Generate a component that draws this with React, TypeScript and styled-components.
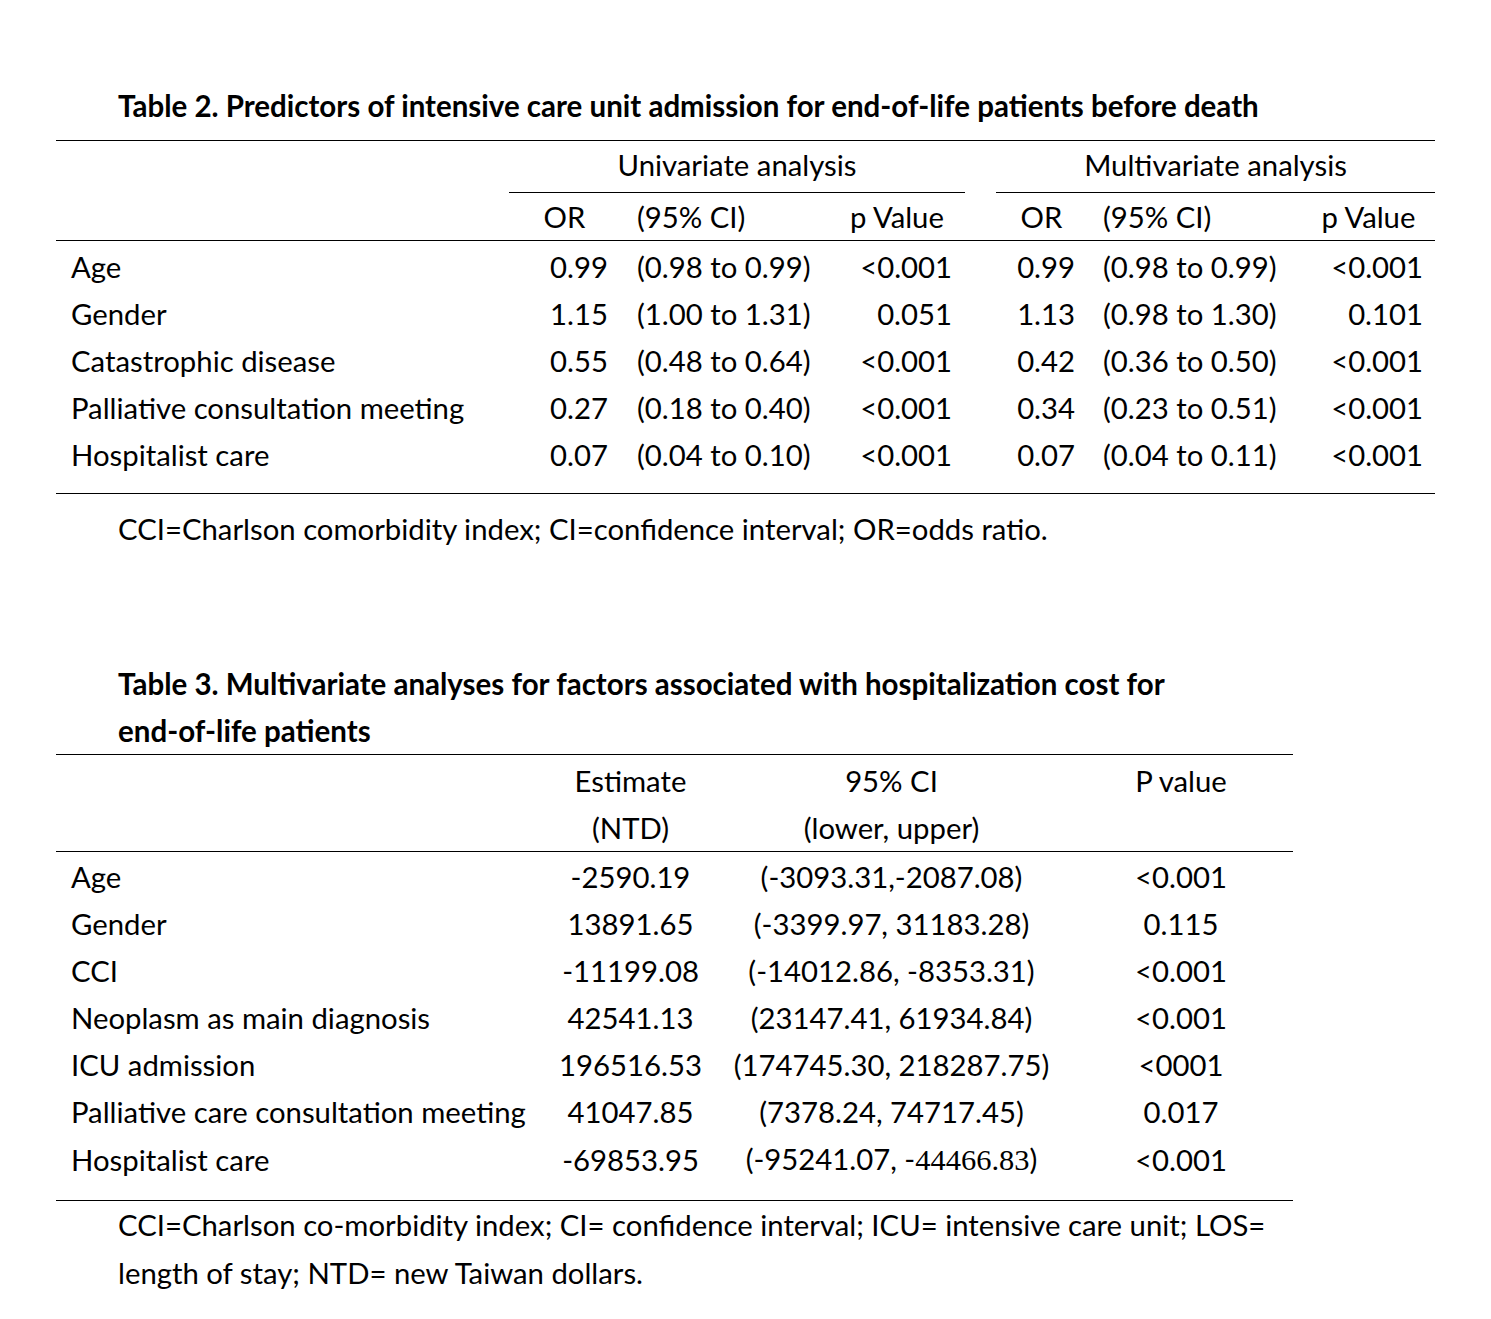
import styled, { createGlobalStyle } from "styled-components"

const GlobalStyle = createGlobalStyle`
  html, body {
    margin: 0;
    background: #fff;
  }
  body {
    font-family: "Lato", "Liberation Sans", sans-serif;
    color: #000;
  }
`

const Page = styled.div`
  display: flex;
  flex-direction: column;
  padding: 82px 0 0 56px;
  font-size: 29.3px;
  line-height: 47px;
`

const Title = styled.h2<{ $top?: number; $bottom?: number }>`
  margin: ${(p) => p.$top ?? 0}px 0 ${(p) => p.$bottom ?? 0}px 62px;
  font-size: 29.5px;
  font-weight: bold;
  line-height: 47px;
`

const Footnote = styled.p<{ $top: number }>`
  margin: ${(p) => p.$top}px 0 0 62px;
  line-height: 48px;
`

const Table = styled.table<{ $width: number }>`
  width: ${(p) => p.$width}px;
  border-collapse: collapse;
  table-layout: fixed;
  border-top: 1px solid #000;
  border-bottom: 1px solid #000;
`

const Row = styled.tr<{ $h: number; $line?: boolean }>`
  height: ${(p) => p.$h}px;
  ${(p) => (p.$line ? "td { border-bottom: 1px solid #000; }" : "")}
`

const Cell = styled.td<{
  $align?: "left" | "center" | "right"
  $underline?: boolean
  $pad?: number
  $pb?: number
}>`
  padding: 0;
  padding-left: ${(p) => (p.$align === "left" ? p.$pad ?? 15 : 0)}px;
  padding-right: ${(p) => (p.$align === "right" ? p.$pad ?? 12 : 0)}px;
  padding-bottom: ${(p) => p.$pb ?? 0}px;
  text-align: ${(p) => p.$align ?? "center"};
  vertical-align: middle;
  white-space: nowrap;
  ${(p) => (p.$underline ? "border-bottom: 1px solid #000;" : "")}
`

const Spacer = styled.tr<{ $h: number }>`
  height: ${(p) => p.$h}px;
  td {
    padding: 0;
    line-height: 0;
  }
`

const Serif = styled.span`
  font-family: "Liberation Serif", serif;
  font-size: 1.04em;
`

const t2Rows = [
  ["Age", "0.99", "(0.98 to 0.99)", "<0.001", "0.99", "(0.98 to 0.99)", "<0.001"],
  ["Gender", "1.15", "(1.00 to 1.31)", "0.051", "1.13", "(0.98 to 1.30)", "0.101"],
  ["Catastrophic disease", "0.55", "(0.48 to 0.64)", "<0.001", "0.42", "(0.36 to 0.50)", "<0.001"],
  ["Palliative consultation meeting", "0.27", "(0.18 to 0.40)", "<0.001", "0.34", "(0.23 to 0.51)", "<0.001"],
  ["Hospitalist care", "0.07", "(0.04 to 0.10)", "<0.001", "0.07", "(0.04 to 0.11)", "<0.001"],
]

const t3Rows: [string, string, React.ReactNode, string][] = [
  ["Age", "-2590.19", "(-3093.31,-2087.08)", "<0.001"],
  ["Gender", "13891.65", "(-3399.97, 31183.28)", "0.115"],
  ["CCI", "-11199.08", "(-14012.86, -8353.31)", "<0.001"],
  ["Neoplasm as main diagnosis", "42541.13", "(23147.41, 61934.84)", "<0.001"],
  ["ICU admission", "196516.53", "(174745.30, 218287.75)", "<0001"],
  ["Palliative care consultation meeting", "41047.85", "(7378.24, 74717.45)", "0.017"],
  [
    "Hospitalist care",
    "-69853.95",
    <>
      (-95241.07, -<Serif>44466.83</Serif>)
    </>,
    "<0.001",
  ],
]

const Table2 = () => (
  <Table $width={1379}>
    <colgroup>
      <col style={{ width: 453 }} />
      <col style={{ width: 111 }} />
      <col style={{ width: 209 }} />
      <col style={{ width: 136 }} />
      <col style={{ width: 31 }} />
      <col style={{ width: 91 }} />
      <col style={{ width: 215 }} />
      <col style={{ width: 133 }} />
    </colgroup>
    <tbody>
      <Row $h={52}>
        <Cell $pb={4} />
        <Cell $pb={4} colSpan={3} $underline>
          Univariate analysis
        </Cell>
        <Cell $pb={4} />
        <Cell $pb={4} colSpan={3} $underline>
          Multivariate analysis
        </Cell>
      </Row>
      <Row $h={47} $line>
        <Cell />
        <Cell>OR</Cell>
        <Cell $align="left" $pad={17}>
          (95% CI)
        </Cell>
        <Cell>p Value</Cell>
        <Cell />
        <Cell>OR</Cell>
        <Cell $align="left" $pad={16}>
          (95% CI)
        </Cell>
        <Cell>p Value</Cell>
      </Row>
      <Spacer $h={2}>
        <td colSpan={8} />
      </Spacer>
      {t2Rows.map((r) => (
        <Row $h={47} key={r[0]}>
          <Cell $align="left">{r[0]}</Cell>
          <Cell $align="right">{r[1]}</Cell>
          <Cell $align="left" $pad={17}>
            {r[2]}
          </Cell>
          <Cell $align="right" $pad={13}>
            {r[3]}
          </Cell>
          <Cell />
          <Cell $align="right">{r[4]}</Cell>
          <Cell $align="left" $pad={16}>
            {r[5]}
          </Cell>
          <Cell $align="right">{r[6]}</Cell>
        </Row>
      ))}
      <Spacer $h={16}>
        <td colSpan={8} />
      </Spacer>
    </tbody>
  </Table>
)

const Table3 = () => (
  <Table $width={1237}>
    <colgroup>
      <col style={{ width: 491 }} />
      <col style={{ width: 167 }} />
      <col style={{ width: 355 }} />
      <col style={{ width: 224 }} />
    </colgroup>
    <tbody>
      <Spacer $h={2}>
        <td colSpan={4} />
      </Spacer>
      <Row $h={47}>
        <Cell />
        <Cell>Estimate</Cell>
        <Cell>95% CI</Cell>
        <Cell>P value</Cell>
      </Row>
      <Row $h={47} $line>
        <Cell />
        <Cell>(NTD)</Cell>
        <Cell>(lower, upper)</Cell>
        <Cell />
      </Row>
      <Spacer $h={2}>
        <td colSpan={4} />
      </Spacer>
      {t3Rows.map((r) => (
        <Row $h={47} key={r[0]}>
          <Cell $align="left">{r[0]}</Cell>
          <Cell>{r[1]}</Cell>
          <Cell>{r[2]}</Cell>
          <Cell>{r[3]}</Cell>
        </Row>
      ))}
      <Spacer $h={16}>
        <td colSpan={4} />
      </Spacer>
    </tbody>
  </Table>
)

export default function App() {
  return (
    <>
      <GlobalStyle />
      <Page>
        <Title $bottom={11}>
          Table 2. Predictors of intensive care unit admission for end-of-life patients before death
        </Title>
        <Table2 />
        <Footnote $top={11}>
          CCI=Charlson comorbidity index; CI=confidence interval; OR=odds ratio.
        </Footnote>
        <Title $top={107}>
          Table 3. Multivariate analyses for factors associated with hospitalization cost for
          <br />
          end-of-life patients
        </Title>
        <Table3 />
        <Footnote $top={0}>
          CCI=Charlson co-morbidity index; CI= confidence interval; ICU= intensive care unit; LOS=
          <br />
          length of stay; NTD= new Taiwan dollars.
        </Footnote>
      </Page>
    </>
  )
}
